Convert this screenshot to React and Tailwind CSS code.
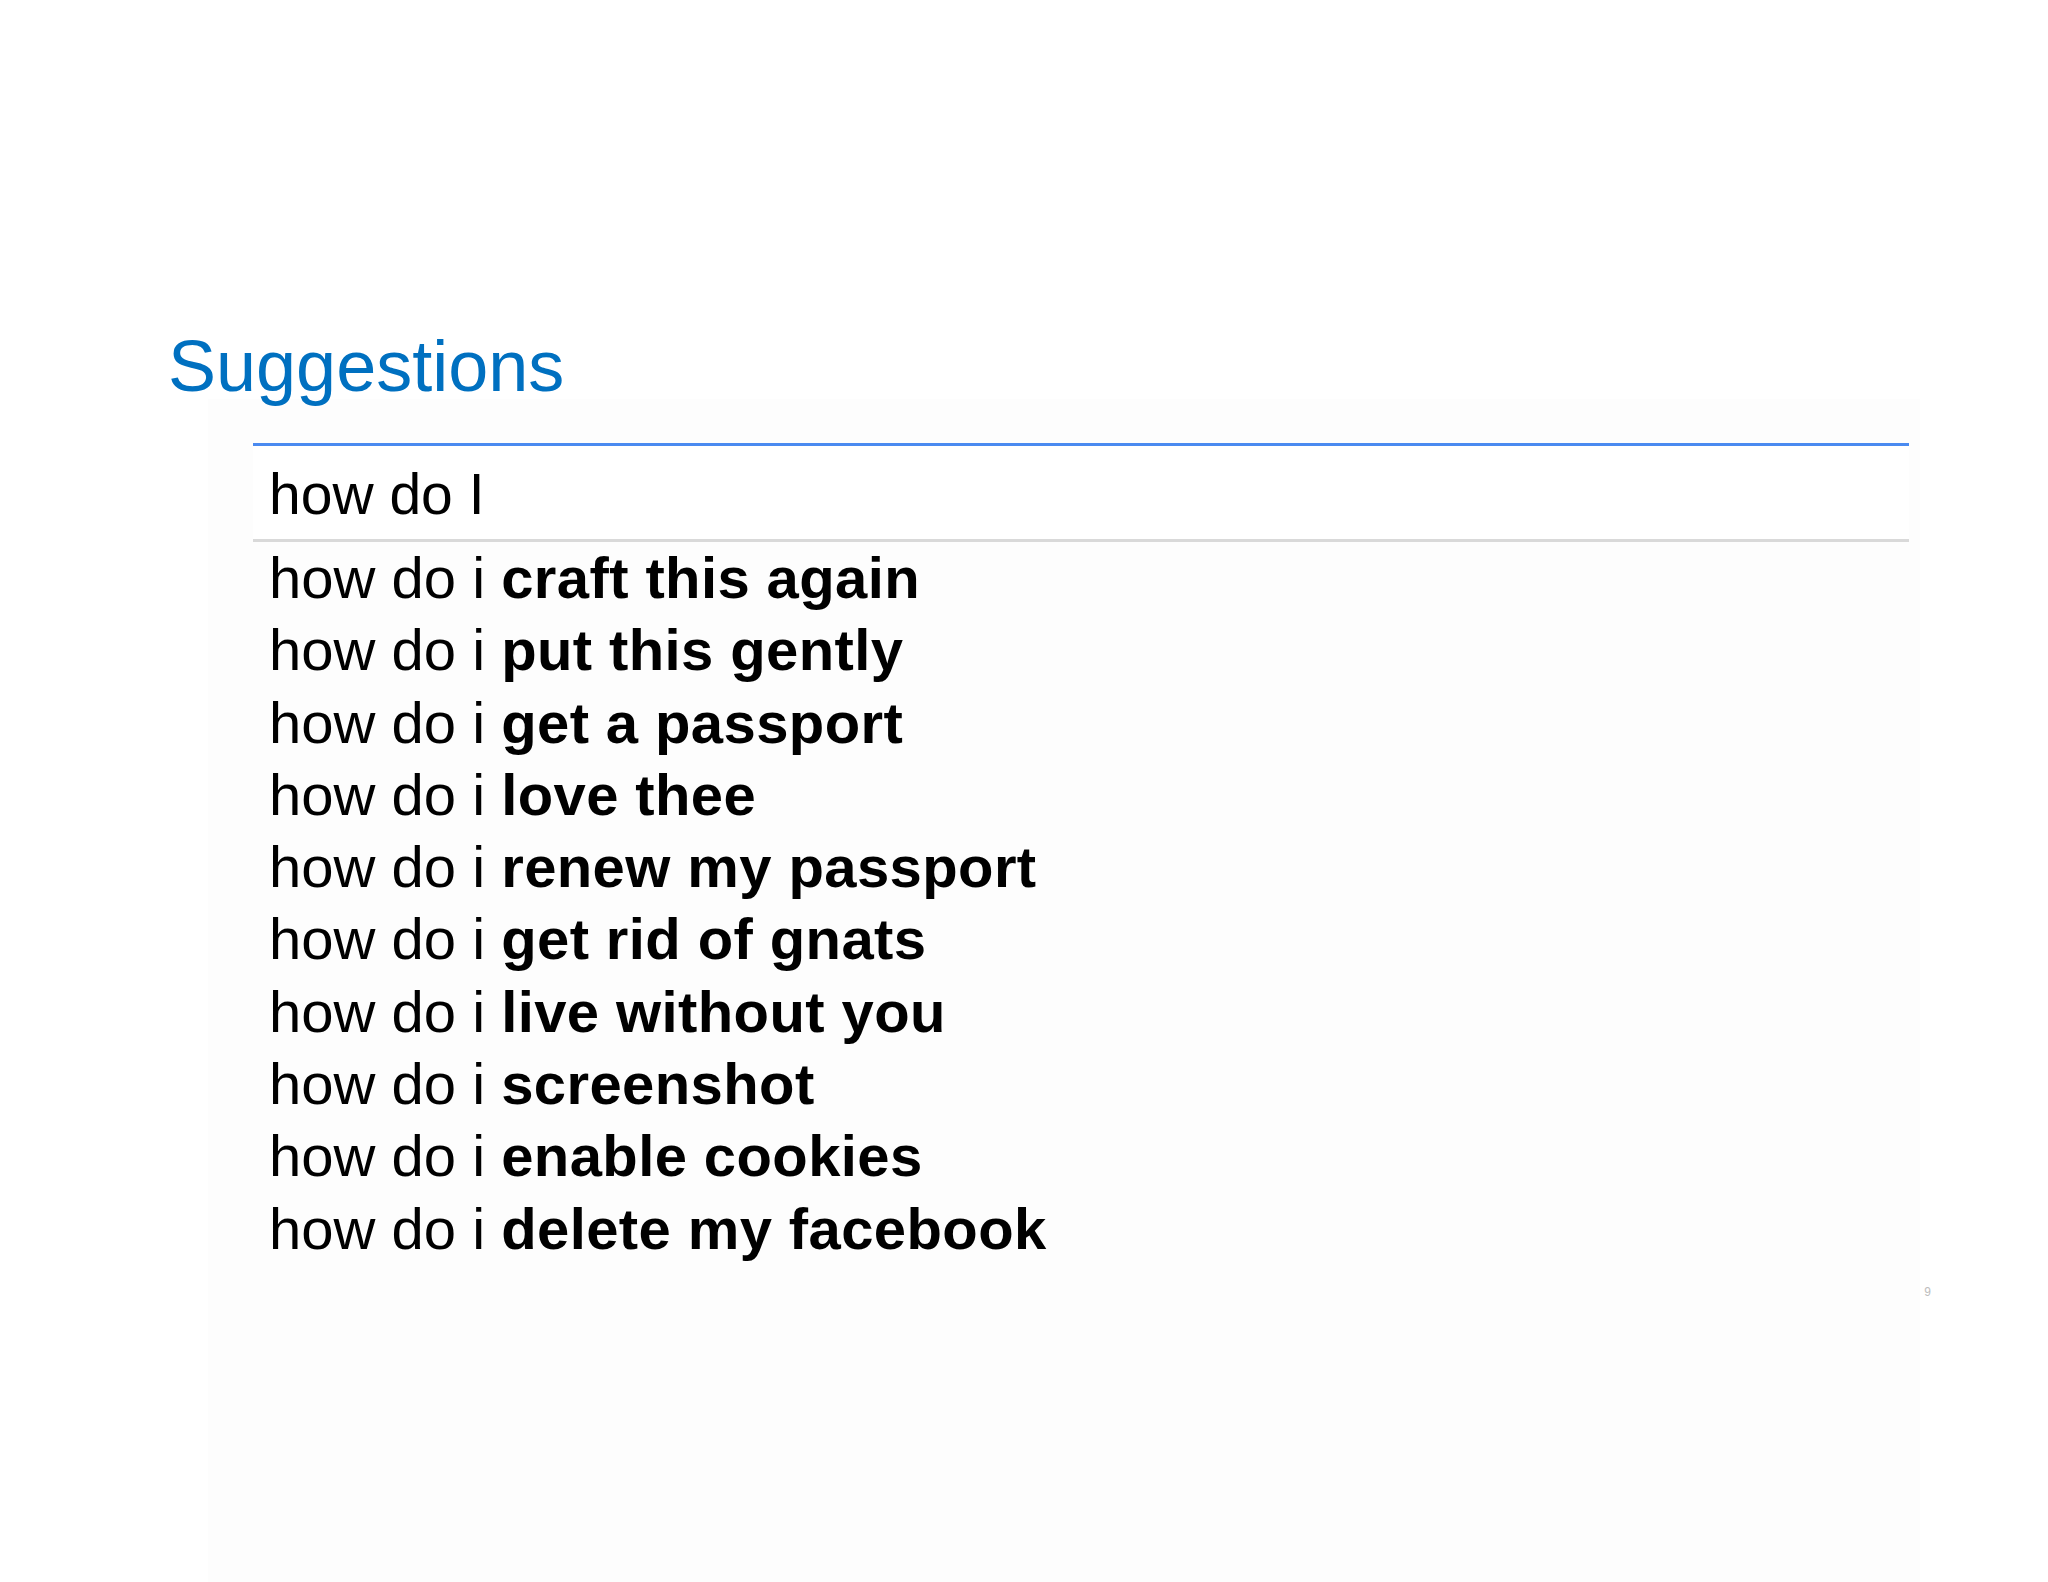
export default function App() {
  const suggestions = [
    "craft this again",
    "put this gently",
    "get a passport",
    "love thee",
    "renew my passport",
    "get rid of gnats",
    "live without you",
    "screenshot",
    "enable cookies",
    "delete my facebook",
  ];

  return (
    <div className="w-full h-[1582px] bg-white flex flex-col overflow-hidden font-['Liberation_Sans',Arial,sans-serif]">
      {/* Slide title */}
      <h1 className="relative z-10 mt-[333px] ml-[168px] text-[72px] leading-[66px] text-[#0070c0] font-normal">
        Suggestions
      </h1>

      {/* Search box panel */}
      <div className="ml-[208px] w-[1712px] flex-1 bg-[#fdfdfd] flex flex-col">
        <div className="mt-[44px] ml-[45px] mr-[11px] h-[3px] bg-[#4a8af0]"></div>
        <div className="ml-[45px] mr-[11px] bg-white pl-[16px] pt-[3px] text-[57px] leading-[90px] text-black">
          how do I
        </div>
        <div className="ml-[45px] mr-[11px] h-[3px] bg-[#d9d9d9]"></div>

        <ul className="pl-[61px] text-[58px] leading-[72.3px] text-black">
          {suggestions.map((s, i) => (
            <li key={i} className="whitespace-nowrap">
              how do i <span className="font-bold tracking-[0.4px]">{s}</span>
            </li>
          ))}
        </ul>

        <div className="ml-auto -mr-[11px] mt-[20px] text-[12px] leading-[14px] text-[#bdbdbd]">9</div>
      </div>
    </div>
  );
}
